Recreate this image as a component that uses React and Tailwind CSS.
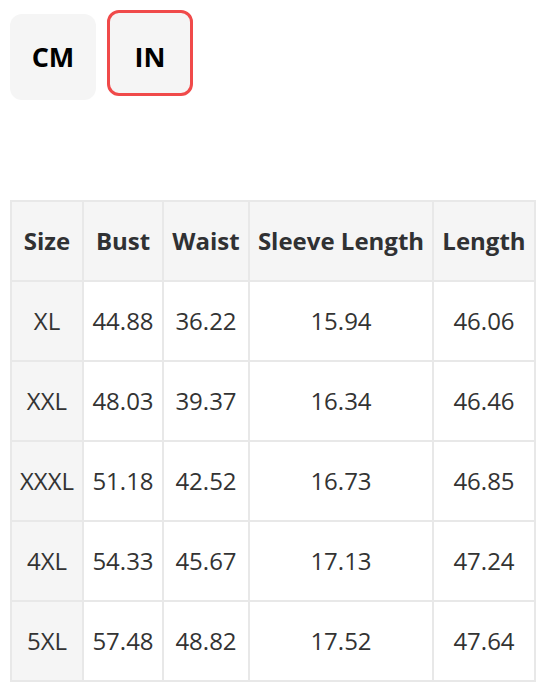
import React from "react";

const rows = [
  ["XL", "44.88", "36.22", "15.94", "46.06"],
  ["XXL", "48.03", "39.37", "16.34", "46.46"],
  ["XXXL", "51.18", "42.52", "16.73", "46.85"],
  ["4XL", "54.33", "45.67", "17.13", "47.24"],
  ["5XL", "57.48", "48.82", "17.52", "47.64"],
];

export default function App() {
  return (
    <div
      className="w-[546px] h-[694px] bg-white pl-[10px] pt-[14px]"
      style={{ fontFamily: '"Open Sans", sans-serif' }}
    >
      <div className="flex items-start gap-[11px]">
        <button className="w-[86px] h-[86px] rounded-[12px] bg-[#f5f5f5] text-[27px] font-bold text-black flex items-center justify-center">
          CM
        </button>
        <button className="w-[86px] h-[86px] -mt-[4px] pt-[8px] rounded-[12px] bg-[#f5f5f5] border-[3px] border-[#f04a4a] text-[27px] font-bold text-black flex items-center justify-center">
          IN
        </button>
      </div>

      <table className="mt-[100px] table-fixed border-collapse w-[524px] text-[24px] text-[#333333]">
        <colgroup>
          <col className="w-[72px]" />
          <col className="w-[80px]" />
          <col className="w-[86px]" />
          <col className="w-[184px]" />
          <col className="w-[102px]" />
        </colgroup>
        <thead>
          <tr className="h-[80px] bg-[#f5f5f5]">
            {["Size", "Bust", "Waist", "Sleeve Length", "Length"].map((h) => (
              <th
                key={h}
                className="border-2 border-[#e8e8e8] font-bold text-center p-0 whitespace-nowrap text-[#303133]"
              >
                {h}
              </th>
            ))}
          </tr>
        </thead>
        <tbody>
          {rows.map((r) => (
            <tr key={r[0]} className="h-[80px]">
              {r.map((c, i) => (
                <td
                  key={i}
                  className={`border-2 border-[#e8e8e8] text-center p-0 whitespace-nowrap ${
                    i === 0 ? "bg-[#f5f5f5]" : "bg-white"
                  }`}
                >
                  {c}
                </td>
              ))}
            </tr>
          ))}
        </tbody>
      </table>
    </div>
  );
}
